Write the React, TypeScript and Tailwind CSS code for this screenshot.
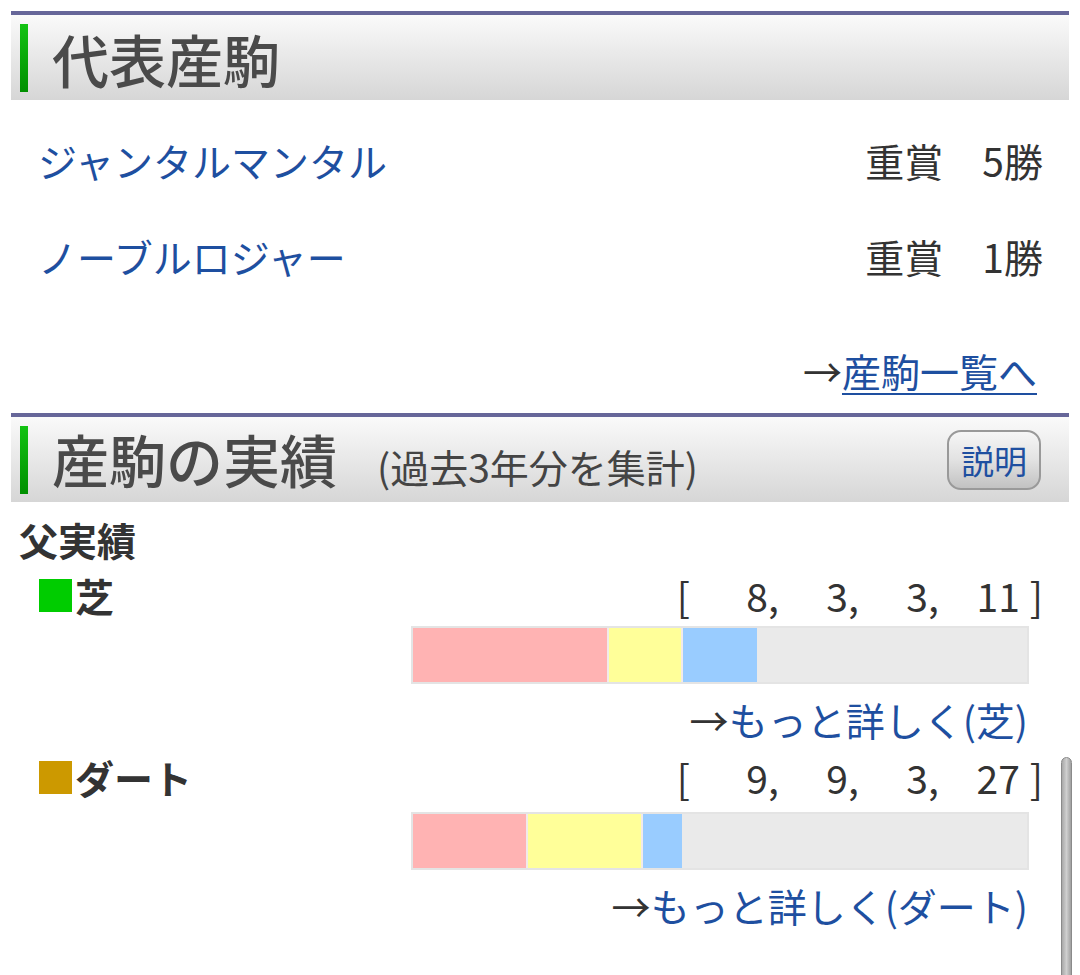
import React from "react";

type Record = { label: string; color: string; counts: number[]; more: string };

const records: Record[] = [
  { label: "芝", color: "bg-[#00cc00]", counts: [8, 3, 3, 11], more: "→もっと詳しく(芝)" },
  { label: "ダート", color: "bg-[#cc9900]", counts: [9, 9, 3, 27], more: "→もっと詳しく(ダート)" },
];

function SectionHeader({ title, children }: { title: string; children?: React.ReactNode }) {
  return (
    <div className="h-[89px] border-t-4 border-[#666699] bg-gradient-to-b from-[#fafafa] to-[#d6d6d6] flex items-center">
      <div className="ml-[9px] w-[8px] h-[68px] bg-gradient-to-b from-[#13c313] to-[#008f00]" />
      <div className="ml-[24px] flex items-baseline">
        <span className="text-[57px] leading-[70px] font-medium text-[#4a4a4a]">{title}</span>
        {children}
      </div>
    </div>
  );
}

function Bar({ counts }: { counts: number[] }) {
  const total = counts.reduce((a, b) => a + b, 0);
  const colors = ["bg-[#ffb3b3]", "bg-[#ffff99]", "bg-[#99ccff]"];
  return (
    <div className="flex justify-end pr-[40px]">
      <div className="w-[618px] h-[58px] border-2 border-[#e4e4e4] bg-[#eaeaea] flex">
        {counts.slice(0, 3).map((n, i) => (
          <div
            key={i}
            className={`${colors[i]} h-full ${i < 2 ? "border-r-2 border-[#f1eaea]" : ""}`}
            style={{ width: `${(n / total) * 100}%` }}
          />
        ))}
      </div>
    </div>
  );
}

export default function App() {
  return (
    <div className="relative w-[1080px] h-[975px] overflow-hidden bg-white font-['Noto_Sans_CJK_JP',sans-serif] text-[#333]">
      <div className="px-[11px] pt-[11px]">
        <SectionHeader title="代表産駒" />

        <div className="pt-[12px]">
          {[
            ["ジャンタルマンタル", "5勝"],
            ["ノーブルロジャー", "1勝"],
          ].map(([name, wins]) => (
            <div key={name} className="h-[96px] flex items-center justify-between pl-[27px] pr-[26px] text-[39px] leading-[50px]">
              <span className="text-[#1e4fa0]">{name}</span>
              <span>重賞　{wins}</span>
            </div>
          ))}
        </div>

        <div className="mt-[41px] mb-[18px] pr-[32px] text-right text-[39px] leading-[50px]">
          →<span className="text-[#1e4fa0] underline underline-offset-[6px] decoration-2">産駒一覧へ</span>
        </div>

        <SectionHeader title="産駒の実績">
          <span className="ml-[40px] text-[39px] text-[#444]">(過去3年分を集計)</span>
        </SectionHeader>
        <div className="relative">
          <button className="absolute right-[28px] top-[-72px] w-[94px] h-[60px] rounded-[14px] border-2 border-[#999] bg-gradient-to-b from-[#f6f6f6] via-[#e2e2e2] to-[#c2c2c2] text-[33px] leading-none text-[#1e4fa0]">
            説明
          </button>
        </div>

        <div className="mt-[12px] pl-[8px] text-[39px] leading-[50px] font-bold">父実績</div>

        {records.map((r, idx) => (
          <div key={r.label} className={idx === 0 ? "mt-[6px]" : "mt-[8px]"}>
            <div className="flex items-center justify-between pl-[28px] pr-[26px] text-[39px] leading-[50px]">
              <div className="flex items-center">
                <span className={`w-[33px] h-[33px] ${r.color}`} />
                <span className="ml-[3px] font-bold">{r.label}</span>
              </div>
              <div className="flex">
                <span>[</span>
                {r.counts.map((n, i) => (
                  <span key={i} className={`text-right ${i === 0 ? "w-[89px]" : i === 3 ? "w-[81px]" : "w-[80px]"}`}>
                    {i < 3 ? `${n},` : n}
                  </span>
                ))}
                <span className="ml-[10px]">]</span>
              </div>
            </div>
            <div className={idx === 0 ? "mt-[6px]" : "mt-[10px]"}>
              <Bar counts={r.counts} />
            </div>
            <div className={`${idx === 0 ? "mt-[10px]" : "mt-[10px]"} pr-[41px] text-right text-[39px] leading-[50px]`}>
              →<span className="text-[#1e4fa0]">{r.more.slice(1)}</span>
            </div>
          </div>
        ))}
      </div>

      <div className="absolute left-[1061px] top-[757px] w-[11px] h-[230px] rounded-t-full border border-[#8a8a8a] bg-gradient-to-r from-[#a8a8a8] via-[#cfcfcf] to-[#a0a0a0]" />
    </div>
  );
}
